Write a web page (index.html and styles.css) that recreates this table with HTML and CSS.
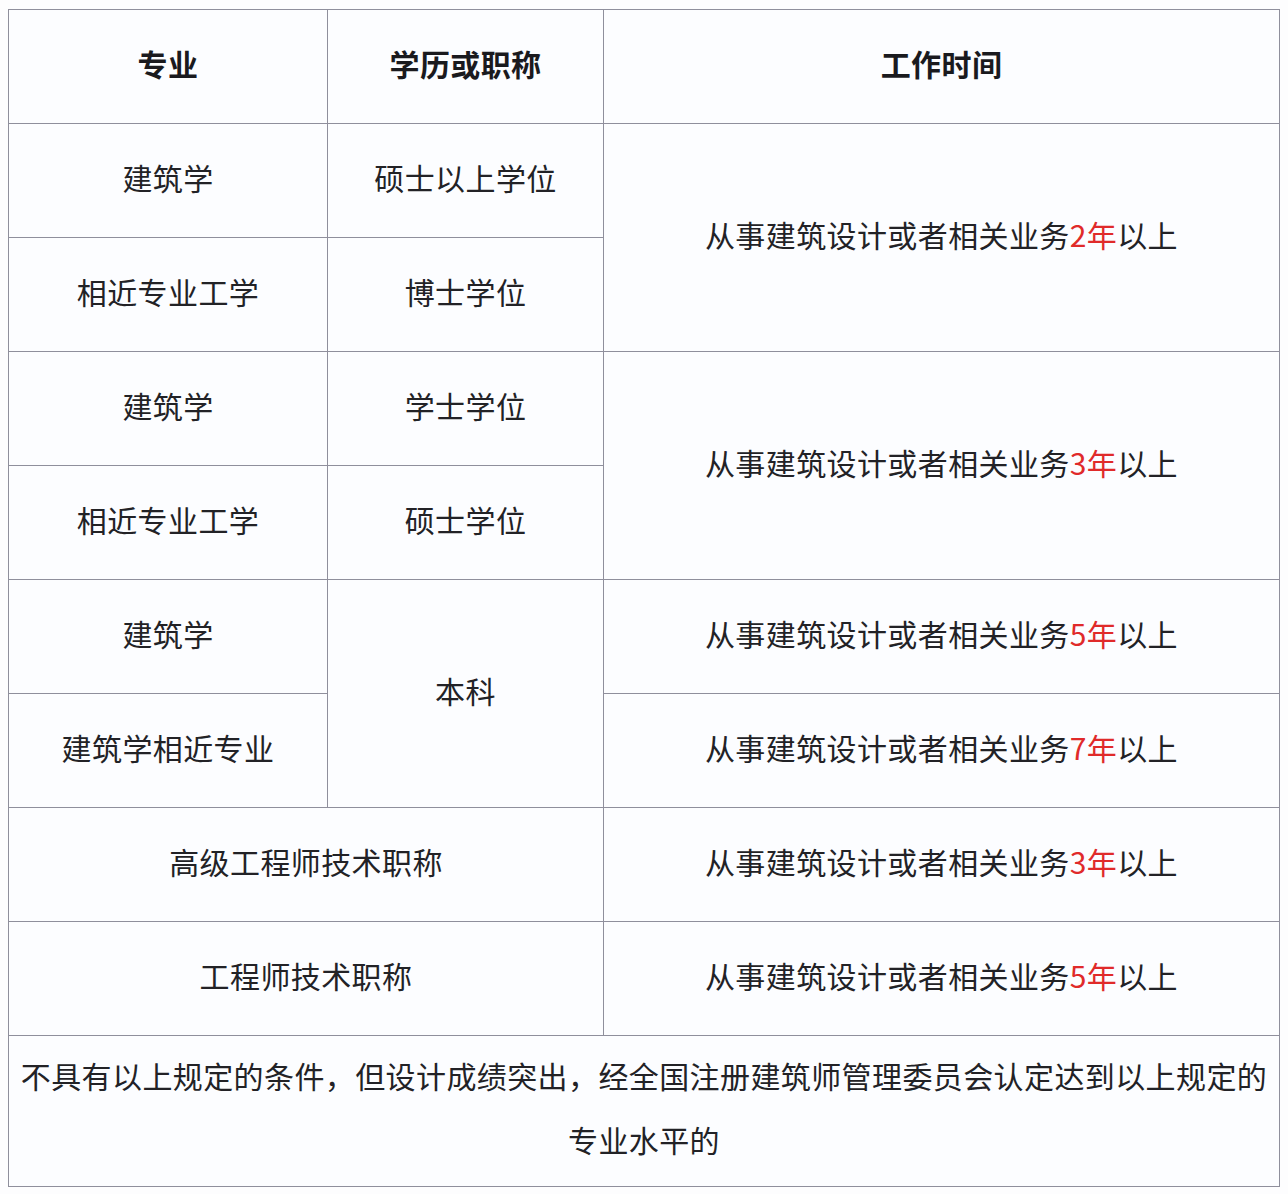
FILE: index.html
```html
<!DOCTYPE html>
<html lang="zh-CN">
<head>
<meta charset="utf-8">
<title>注册建筑师报考条件</title>
<link rel="stylesheet" href="styles.css">
</head>
<body>
<table class="req">
  <colgroup>
    <col class="c1">
    <col class="c2">
    <col class="c3">
  </colgroup>
  <thead>
    <tr class="row">
      <th>专业</th>
      <th>学历或职称</th>
      <th>工作时间</th>
    </tr>
  </thead>
  <tbody>
    <tr class="row">
      <td>建筑学</td>
      <td>硕士以上学位</td>
      <td rowspan="2">从事建筑设计或者相关业务<span class="hl">2年</span>以上</td>
    </tr>
    <tr class="row">
      <td>相近专业工学</td>
      <td>博士学位</td>
    </tr>
    <tr class="row">
      <td>建筑学</td>
      <td>学士学位</td>
      <td rowspan="2">从事建筑设计或者相关业务<span class="hl">3年</span>以上</td>
    </tr>
    <tr class="row">
      <td>相近专业工学</td>
      <td>硕士学位</td>
    </tr>
    <tr class="row">
      <td>建筑学</td>
      <td rowspan="2">本科</td>
      <td>从事建筑设计或者相关业务<span class="hl">5年</span>以上</td>
    </tr>
    <tr class="row">
      <td>建筑学相近专业</td>
      <td>从事建筑设计或者相关业务<span class="hl">7年</span>以上</td>
    </tr>
    <tr class="row">
      <td colspan="2">高级工程师技术职称</td>
      <td>从事建筑设计或者相关业务<span class="hl">3年</span>以上</td>
    </tr>
    <tr class="row">
      <td colspan="2">工程师技术职称</td>
      <td>从事建筑设计或者相关业务<span class="hl">5年</span>以上</td>
    </tr>
    <tr class="row-last">
      <td colspan="3" class="note">不具有以上规定的条件，但设计成绩突出，经全国注册建筑师管理委员会认定达到以上规定的专业水平的</td>
    </tr>
  </tbody>
</table>
</body>
</html>
```

FILE: styles.css
```css
html, body {
  background: #fdfdfe;
}
body {
  margin: 9px 8px 8px 8px;
  font-family: "Noto Sans CJK SC", "Noto Sans", sans-serif;
  color: #222226;
}
.req {
  border-collapse: collapse;
  width: 1271px;
  table-layout: fixed;
  background: #fcfdff;
}
.c1 { width: 319px; }
.c2 { width: 276px; }
.c3 { width: 676px; }
.req th,
.req td {
  border: 1px solid #8f8f9c;
  text-align: center;
  vertical-align: middle;
  padding: 0 4px 8px 4px;
  font-size: 30px;
  letter-spacing: 0.4px;
  line-height: 40px;
}
.req th {
  font-weight: 700;
  color: #1a1a1e;
}
.req td {
  font-weight: 400;
}
.row {
  height: 114px;
}
.row-last {
  height: 150px;
}
.req td.note {
  line-height: 64px;
  padding: 7px 4px 15px 4px;
}
.hl {
  color: #e02a2a;
}
```
